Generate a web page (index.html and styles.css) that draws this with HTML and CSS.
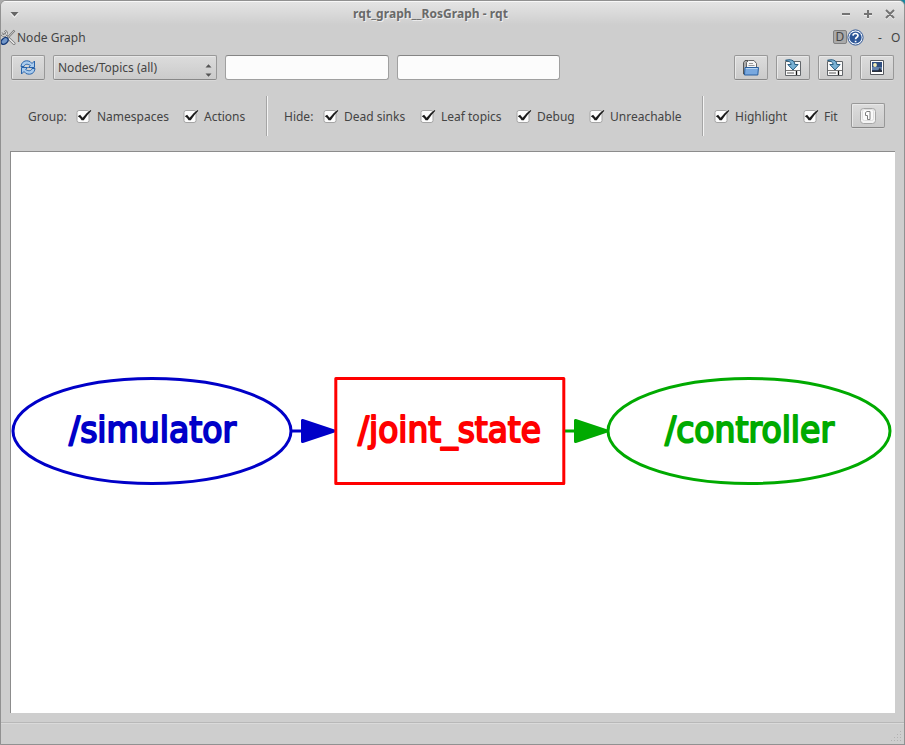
FILE: index.html
```html
<!DOCTYPE html>
<html lang="en">
<head>
<meta charset="utf-8">
<title>rqt_graph__RosGraph - rqt</title>
<link rel="stylesheet" href="styles.css">
</head>
<body>
<svg class="defs" width="0" height="0">
  <defs>
    <symbol id="check" viewBox="0 0 17 17">
      <rect x="1" y="3.5" width="12" height="12" rx="2" fill="#fcfcfc" stroke="#a4a4a4"/>
      <path d="M1.800 9.200l2.300-1.500L6.600 10.800Q9.800 6 14.700 3L15.300 3.700Q11 8 7.800 13.300H5.600Q4.400 10.800 1.800 9.200z" fill="#1c1c1c"/>
    </symbol>
    <symbol id="save" viewBox="0 0 18 18">
      <path d="M1.500 2.500h15v14h-15z" fill="#fafafa" stroke="#62666a"/>
      <path d="M2 11.500h14" stroke="#777"/>
      <path d="M3 14h7" stroke="#aaa" stroke-width="2"/>
      <path d="M12.500 12v4" stroke="#111" stroke-width="1.300"/>
      <path d="M1.500 1.300C6-.1 10.800 1 10.800 5.500h3.300L9 11 3.800 5.500h3.400C7.200 3.200 4.500 2 1.500 1.300z" fill="#79b1d4" stroke="#285d80"/>
    </symbol>
  </defs>
</svg>
<div class="desktop">
<div class="window">
  <header class="titlebar">
    <svg class="menu-arrow" width="9" height="6" viewBox="0 0 9 6"><path d="M0 1h9L4.500 6z" fill="#fff" opacity=".7"/><path d="M.500 0h8l-4 4.600z" fill="#666"/></svg>
    <h1 class="title">rqt_graph__RosGraph - rqt</h1>
    <svg class="controls" width="54" height="10" viewBox="0 0 54 10" fill="none" stroke="#737373" stroke-width="2"><path d="M1 5h8M23 5h8M27 1v8M45 1l8 8M53 1l-8 8"/></svg>
  </header>
  <div class="dock">
    <svg width="16" height="17" viewBox="0 0 16 17">
      <path d="M4.500 5.500l9.500 9" stroke="#777" stroke-width="3" stroke-linecap="round"/>
      <path d="M4.500 5.500l9.500 9" stroke="#eee" stroke-width="1.400" stroke-linecap="round"/>
      <path d="M1.800 3.500v2.300L4 7l2-1 .7-2.500L4.800 1.500" fill="none" stroke="#777" stroke-width="2.400"/>
      <path d="M1.800 3.500v2.300L4 7l2-1 .7-2.500L4.800 1.500" fill="none" stroke="#eee" stroke-width="1"/>
      <path d="M14.500 1.500L6 10.500" stroke="#777" stroke-width="2.200"/>
      <path d="M14 2L7 9.500" stroke="#ddd" stroke-width=".8"/>
      <ellipse cx="4.600" cy="12" rx="4" ry="2.700" transform="rotate(-43 4.600 12)" fill="#7297ca" stroke="#173b78" stroke-width="1.300"/>
    </svg>
    <span class="dock-name">Node Graph</span>
    <span class="badge-d">D</span>
    <svg class="help" width="17" height="17" viewBox="0 0 17 17"><circle cx="8.500" cy="8.500" r="7.600" fill="#f2f6fc" stroke="#315795" stroke-width="1"/><circle cx="8.500" cy="8.500" r="6.100" fill="#2d5697"/><path d="M6 6.600Q6.200 4.500 8.500 4.500T11 6.500Q11 7.600 9.600 8.400 8.600 9 8.600 10.200M8.600 11.700v1.500" fill="none" stroke="#fff" stroke-width="1.700"/></svg>
    <span class="dash">-</span><span class="float">O</span>
  </div>
  <div class="toolbar">
    <button class="btn"><svg width="18" height="18" viewBox="0 0 18 18"><g fill="#a9cbed" stroke="#2863aa"><path d="M2 7.500C2.500 3 6 .5 11 2.500L13 4.500 15.500 2V8.500H9.500L11.300 6.500C8.500 4.500 5.500 5 5 7.500z"/><path d="M16 9.500C15.500 14 12 16.500 7 14.500L5 12.500 2.500 15V8.500H8.500L6.700 10.500C9.500 12.500 12.500 12 13 9.500z"/></g></svg></button>
    <div class="combo"><span>Nodes/Topics (all)</span><svg width="7" height="13" viewBox="0 0 7 13" fill="#555"><path d="M.500 3.500h6L3.500 .3zM.500 9.500h6L3.500 12.700z"/></svg></div>
    <input class="field field-a" type="text" aria-label="Node filter">
    <input class="field field-b" type="text" aria-label="Topic filter">
    <div class="actions">
      <button class="btn"><svg width="18" height="18" viewBox="0 0 18 18"><path d="M1.500 15V3.500L3 1.500h3V15z" fill="#aaa" stroke="#555"/><path d="M4.500 11V3.500l2-2H12l2.500 3V11z" fill="#f5f5f5" stroke="#666"/><path d="M7 4.500h4M6.500 6.500h6" stroke="#999"/><path d="M3 8.500h13.500l-.7 7.500H2.500z" fill="#78a8df" stroke="#285f9f"/><path d="M3.800 9.500h11.800" stroke="#b6d3f1"/></svg></button>
      <button class="btn"><svg width="18" height="18"><use href="#save"/></svg></button>
      <button class="btn"><svg width="18" height="18"><use href="#save"/></svg></button>
      <button class="btn"><svg width="18" height="18" viewBox="0 0 18 18"><path d="M2.500 1.500h13v14h-13z" fill="#fff" stroke="#55585e"/><path d="M4 3h10v10H4z" fill="#304f80"/><path d="M4 8h10v3H4z" fill="#6583ac"/><path d="M4 13v-1.500h6l2-3 1 2.500 1 .5V13z" fill="#2a303c"/><circle cx="7" cy="6" r="1.900" fill="#f4edb4"/></svg></button>
    </div>
  </div>
  <div class="options">
    <span class="lbl w-group">Group:</span>
    <label class="opt w-ns"><svg width="17" height="17"><use href="#check"/></svg>Namespaces</label>
    <label class="opt w-act"><svg width="17" height="17"><use href="#check"/></svg>Actions</label>
    <i class="sep"></i>
    <span class="lbl w-hide">Hide:</span>
    <label class="opt w-dead"><svg width="17" height="17"><use href="#check"/></svg>Dead sinks</label>
    <label class="opt w-leaf"><svg width="17" height="17"><use href="#check"/></svg>Leaf topics</label>
    <label class="opt w-debug"><svg width="17" height="17"><use href="#check"/></svg>Debug</label>
    <label class="opt w-unr"><svg width="17" height="17"><use href="#check"/></svg>Unreachable</label>
    <i class="sep sep-b"></i>
    <label class="opt w-high"><svg width="17" height="17"><use href="#check"/></svg>Highlight</label>
    <label class="opt w-fit"><svg width="17" height="17"><use href="#check"/></svg>Fit</label>
    <button class="btn fit-btn"><svg width="18" height="18" viewBox="0 0 18 18"><rect x="1.500" y="1.500" width="15" height="15" rx="3" fill="#f4f4f4" stroke="#a5a5a5"/><rect x="3.500" y="2.500" width="11" height="11" rx="2" fill="#fafafa" stroke="#ddd"/><path d="M6.500 5.500L8 4.500h3v8H8.500v-4h-2z" fill="#fff" stroke="#808080"/></svg></button>
  </div>
  <main class="view">
    <svg width="884" height="561" viewBox="11 152 884 561">
      <g class="node" stroke="#0000c8" fill="#0000c8">
        <ellipse cx="152" cy="431" rx="139" ry="52.500" fill="none"/>
        <path d="M291 431h11"/><path d="M302.500 420.500v21L334 431z"/>
        <text x="69" y="442.300" textLength="167" lengthAdjust="spacingAndGlyphs">/simulator</text>
      </g>
      <g class="node" stroke="#00aa00" fill="#00aa00">
        <ellipse cx="749" cy="431" rx="141" ry="52.500" fill="none"/>
        <path d="M564 431h11"/><path d="M575.500 420.500v21L607 431z"/>
        <text x="665" y="442.300" textLength="169" lengthAdjust="spacingAndGlyphs">/controller</text>
      </g>
      <g class="node" stroke="#ff0000" fill="#ff0000">
        <rect x="335.800" y="378.500" width="228" height="105" fill="none"/>
        <text x="358" y="442.300" textLength="183" lengthAdjust="spacingAndGlyphs">/joint_state</text>
      </g>
    </svg>
  </main>
  <footer class="status"><svg width="12" height="12" viewBox="0 0 12 12" fill="#b2b2b2"><path d="M10 1h1v1h-1zM7 4h1v1H7zM10 4h1v1h-1zM4 7h1v1H4zM7 7h1v1H7zM10 7h1v1h-1zM1 10h1v1H1zM4 10h1v1H4zM7 10h1v1H7zM10 10h1v1h-1z"/></svg></footer>
</div>
</div>
</body>
</html>
```
FILE: styles.css
```css
* { box-sizing: border-box; }
body { margin: 0; font: 12px/18px "Noto Sans", sans-serif; color: #444; overflow: hidden; }
svg { display: block; flex: none; }
.defs { position: absolute; }
.desktop { width: 905px; height: 745px; background: linear-gradient(90deg, #aaa 50%, #1788a0 50%); }
.window { width: 905px; height: 745px; display: flex; flex-direction: column; background: #cecece; border: 1px solid #919191; border-radius: 6px 6px 0 0; overflow: hidden; }
.titlebar { height: 25px; flex: none; display: flex; align-items: center; padding: 0 10px 1px 9px; background: linear-gradient(#e4e4e4, #cecece 95%); border-top: 1px solid #f8f8f8; }
.menu-arrow { margin-top: 2px; }
.title { flex: 1; margin: 1px 0 0; padding-left: 1px; text-align: center; font-size: 12px; font-weight: 700; letter-spacing: .04px; line-height: 18px; color: #696969; text-shadow: 1px 1px 0 #eee; }
.controls { filter: drop-shadow(0 1px 0 #eee); margin-right: -1px; }
.dock { height: 22px; flex: none; display: flex; align-items: center; padding: 1px 4px 0 0; }
.dock > svg:first-child { margin-left: -1px; }
.dock-name { margin-left: 1px; flex: 1; }
.badge-d { width: 14px; height: 14px; line-height: 12px; text-align: center; border: 1px solid #808080; border-radius: 2px; background: #a9a9a9; margin-top: -1px; }
.help { margin-top: -1px; }
.dash { margin-left: 14px; width: 13px; }
.float { width: 9px; }
.toolbar { height: 47px; flex: none; display: flex; padding: 7px 10px 0; }
.btn, .combo { border: 1px solid #989898; border-bottom-color: #888; border-radius: 2px; background: linear-gradient(#dcdcdc, #cbcbcb); box-shadow: inset 1px 1px 0 #e8e8e8, 0 1px 0 #d8d8d8; }
.btn { width: 34px; height: 25px; padding: 0; flex: none; display: flex; align-items: center; justify-content: center; }
.combo { width: 164px; height: 25px; margin-left: 8px; padding: 0 4px; display: flex; align-items: center; justify-content: space-between; }
.combo svg { margin-top: 5px; }
.field { height: 25px; margin: 0 0 0 8px; padding: 0 4px; border: 1px solid #a0a0a0; border-top-color: #858585; border-radius: 3px; background: #fcfcfc; font: inherit; }
.field-a { width: 164px; }
.field-b { width: 163px; }
.actions { display: flex; gap: 8px; margin-left: auto; }
.options { height: 56px; flex: none; display: flex; align-items: center; padding: 1px 0 15px 27px; }
.options > * { flex: none; }
.lbl, .opt { padding-top: 2px; }
.opt { display: flex; align-items: center; gap: 4px; }
.opt svg { margin-top: -4px; }
.w-group { width: 48px; }
.w-ns { width: 107px; }
.w-act { width: 83px; }
.sep { width: 2px; height: 40px; background: linear-gradient(90deg, #a5a5a5 50%, #f4f4f4 50%); margin-right: 16px; }
.w-hide { width: 39px; }
.w-dead { width: 97px; }
.w-leaf { width: 96px; }
.w-debug { width: 73px; }
.w-unr { width: 113px; }
.sep-b { margin-right: 10px; }
.w-high { width: 89px; }
.w-fit { width: 48px; }
.fit-btn { margin-top: -1px; }
.view { width: 885px; height: 562px; flex: none; margin-left: 9px; background: #fff; border: solid #8c8c8c; border-width: 1px 0 0 1px; }
.node { stroke-width: 3; stroke-linejoin: round; }
.node text { font: 35px "DejaVu Sans", sans-serif; stroke-width: 2; }
.status { flex: 1; margin-top: 9px; border-top: 1px solid #b8b8b8; box-shadow: inset 0 1px 0 #dadada; display: flex; justify-content: flex-end; align-items: flex-end; padding: 0 2px 2px 0; }
```
